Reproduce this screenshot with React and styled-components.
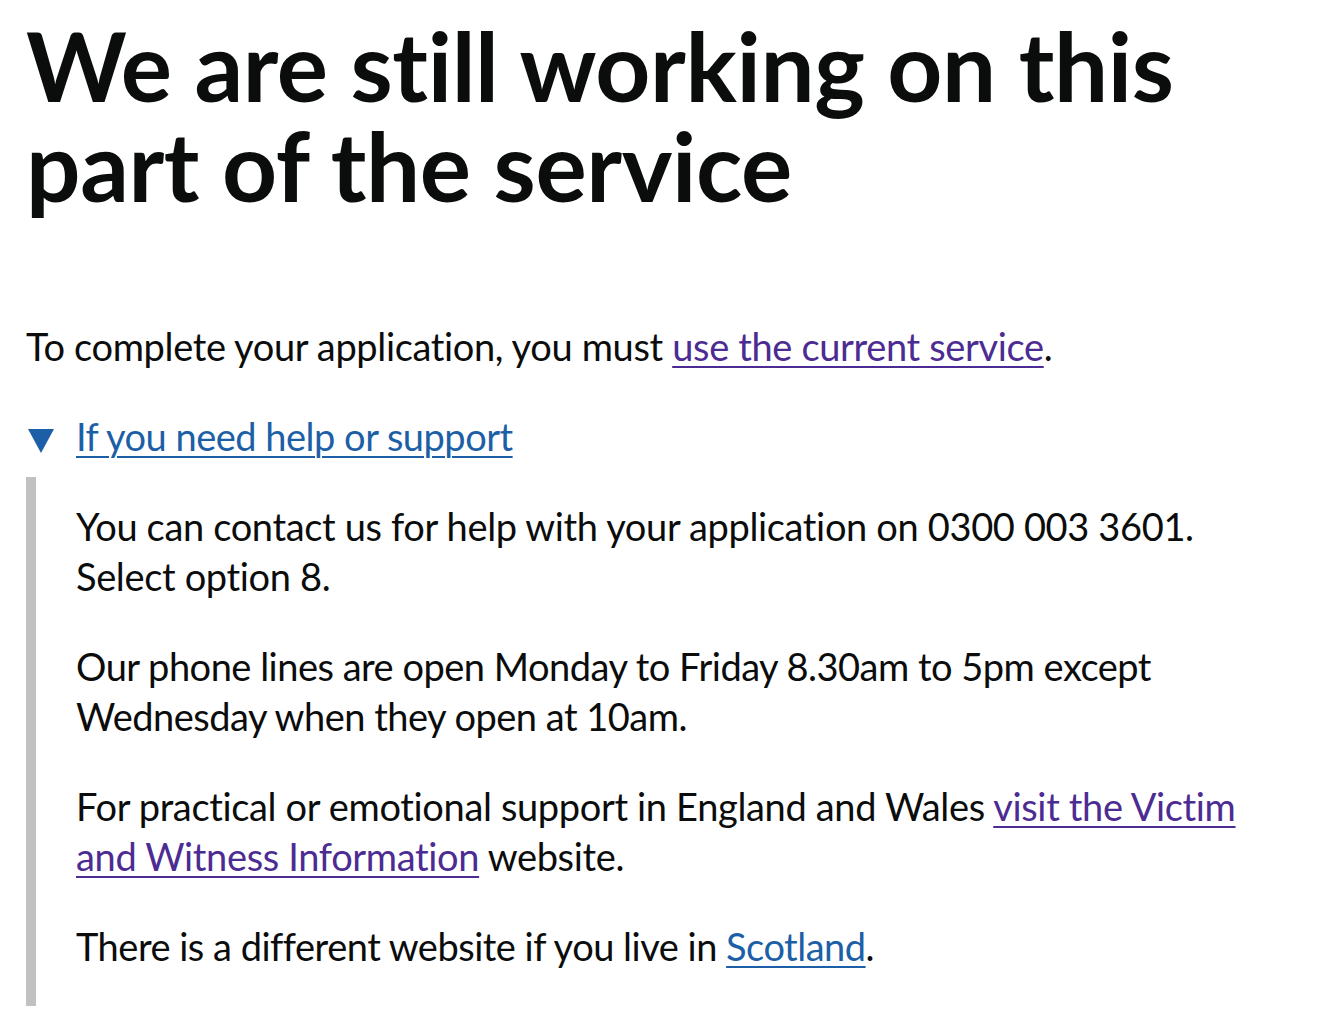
import styled, { createGlobalStyle } from 'styled-components';

const colors = {
  text: '#0b0c0c',
  link: '#1d5fa6',
  visited: '#4c2c92',
  border: '#bfc1c3',
};

const GlobalStyle = createGlobalStyle`
  html, body {
    margin: 0;
    padding: 0;
    background: #ffffff;
  }
  body {
    font-family: Lato, "Liberation Sans", sans-serif;
    color: ${colors.text};
    font-variant-ligatures: none;
    -webkit-font-smoothing: antialiased;
  }
`;

const Main = styled.main`
  padding: 15px 35px 0 26px;
  max-width: 1259px;
`;

const Heading = styled.h1`
  margin: 0 0 106px;
  font-size: 96px;
  line-height: 100px;
  font-weight: 700;
  letter-spacing: -0.4px;
`;

const Body = styled.p`
  margin: 0 0 40px;
  font-size: 38px;
  line-height: 50px;
  font-weight: 400;
  letter-spacing: ${props => props.$tight ? '-0.5px' : '-0.35px'};
  &:last-child {
    margin-bottom: 0;
  }
`;

const Link = styled.a`
  color: ${props => (props.$visited ? colors.visited : colors.link)};
  text-decoration: underline;
  text-decoration-thickness: 2px;
  text-underline-offset: 5px;
`;

const Details = styled.details`
  margin: 0;
  font-size: 38px;
  line-height: 50px;
`;

const Summary = styled.summary`
  display: inline-block;
  position: relative;
  padding-left: 50px;
  margin-bottom: 16px;
  color: ${colors.link};
  letter-spacing: -0.5px;
  cursor: pointer;
  list-style: none;
  &::-webkit-details-marker {
    display: none;
  }
  &::before {
    content: '';
    position: absolute;
    left: 2px;
    top: 18px;
    border-style: solid;
    border-width: 24px 13px 0 13px;
    border-color: ${colors.link} transparent transparent transparent;
  }
`;

const SummaryText = styled.span`
  text-decoration: underline;
  text-decoration-thickness: 2px;
  text-underline-offset: 5px;
`;

const DetailsText = styled.div`
  padding: 24px 0 35px 40px;
  border-left: 10px solid ${colors.border};
`;

export default function App() {
  return (
    <>
      <GlobalStyle />
      <Main>
        <Heading>We are still working on this part of the service</Heading>
        <Body>
          To complete your application, you must{' '}
          <Link href="#" $visited>use the current service</Link>.
        </Body>
        <Details open>
          <Summary>
            <SummaryText>If you need help or support</SummaryText>
          </Summary>
          <DetailsText>
            <Body>
              You can contact us for help with your application on 0300 003 3601.
              Select option 8.
            </Body>
            <Body $tight>
              Our phone lines are open Monday to Friday 8.30am to 5pm except
              Wednesday when they open at 10am.
            </Body>
            <Body>
              For practical or emotional support in England and Wales{' '}
              <Link href="#" $visited>visit the Victim and Witness Information</Link>{' '}
              website.
            </Body>
            <Body $tight>
              There is a different website if you live in <Link href="#">Scotland</Link>.
            </Body>
          </DetailsText>
        </Details>
      </Main>
    </>
  );
}
